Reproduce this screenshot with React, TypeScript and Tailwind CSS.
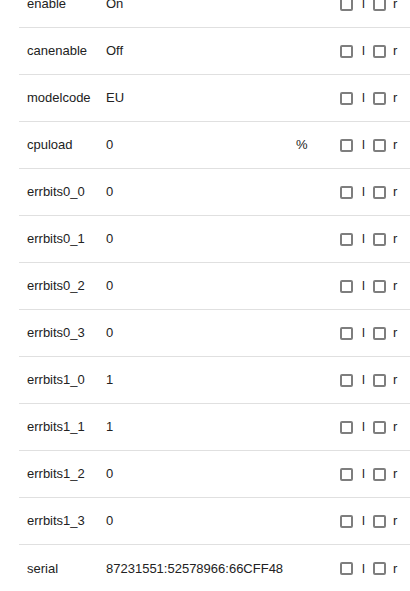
const rows: { name: string; value: string; unit?: string }[] = [
  { name: "enable", value: "On" },
  { name: "canenable", value: "Off" },
  { name: "modelcode", value: "EU" },
  { name: "cpuload", value: "0", unit: "%" },
  { name: "errbits0_0", value: "0" },
  { name: "errbits0_1", value: "0" },
  { name: "errbits0_2", value: "0" },
  { name: "errbits0_3", value: "0" },
  { name: "errbits1_0", value: "1" },
  { name: "errbits1_1", value: "1" },
  { name: "errbits1_2", value: "0" },
  { name: "errbits1_3", value: "0" },
  { name: "serial", value: "87231551:52578966:66CFF48" },
];

function Box() {
  return <span className="inline-block w-[13px] h-[13px] border-2 border-[#7e7e7e] rounded-[2px] bg-white" />;
}

export default function App() {
  return (
    <div className="bg-white min-h-[591px] overflow-hidden font-['Liberation_Sans',Arial,sans-serif] text-[13px] text-[#222]">
      <div className="ml-[19px] -mt-[19px]">
        {rows.map((r, i) => (
          <div
            key={r.name}
            className={`grid grid-cols-[87px_190px_44px_1fr] items-center h-[47px] ${
              i < rows.length - 1 ? "border-b border-[#e0e0e0]" : ""
            }`}
          >
            <span className="pl-[8px]">{r.name}</span>
            <span>{r.value}</span>
            <span>{r.unit ?? ""}</span>
            <span className="flex items-center">
              <Box />
              <span className="ml-[9px] mr-[8px]">l</span>
              <Box />
              <span className="ml-[7px]">r</span>
            </span>
          </div>
        ))}
      </div>
    </div>
  );
}
